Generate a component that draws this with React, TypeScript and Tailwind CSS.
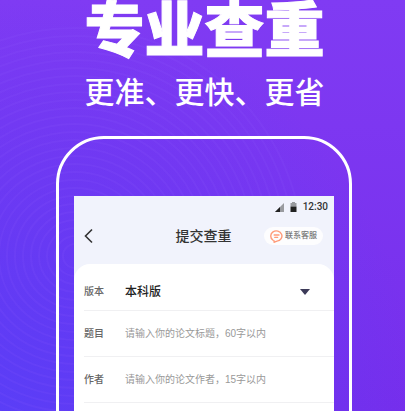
import type { ReactNode } from 'react';

const rings = Array.from({ length: 28 }, (_, i) => 12 + i * 8);

const fields = [
  { id: 'title', label: '题目', placeholder: '请输入你的论文标题，60字以内' },
  { id: 'author', label: '作者', placeholder: '请输入你的论文作者，15字以内' },
];

const Row = ({ id, label, children }: { id: string; label: string; children: ReactNode }) => (
  <div className="ml-[10px] flex h-[46px] items-center border-b border-[#f0f0f2] first:h-[47px] first:pt-[9px]">
    <label htmlFor={id} className="w-[41px] shrink-0 text-[10px] font-medium leading-4 text-[#666]">
      {label}
    </label>
    {children}
  </div>
);

const StatusBar = () => (
  <div className="flex h-[22px] items-center justify-end gap-[6px] pr-[6px]">
    {/* Signal */}
    <svg className="h-[9px] w-[9px]" viewBox="0 0 9 9">
      <path d="M0 9L9 0v9z" fill="#999b9f" />
      <path d="M0 9l5-5v5z" fill="#222" />
    </svg>
    {/* Battery */}
    <svg className="h-[10px] w-[7px]" viewBox="0 0 7 10">
      <path d="M2 0h3v1h1.5v3.5h-6V1H2z" fill="#999b9f" />
      <path d="M.5 4.5h6V10h-6z" fill="#222" />
    </svg>
    <span className="font-['Roboto',sans-serif] text-[10px] font-medium leading-3 text-[#333]">12:30</span>
  </div>
);

const App = () => {
  return (
    <div className="relative h-screen overflow-hidden bg-[radial-gradient(circle_at_0%_100%,#5a3ef7_0%,#5a3ef700_420px),linear-gradient(180deg,#803bf3,#762eec)] font-['Liberation_Sans','Noto_Sans_CJK_SC',sans-serif]">
      {/* Background rings */}
      <svg className="absolute inset-0 h-full w-full" fill="none" stroke="#9460ff" strokeWidth="2" strokeOpacity="0.12">
        {rings.map((r) => (
          <circle key={r} cx="75" cy="256" r={r} />
        ))}
      </svg>

      <main className="relative">
        <header className="h-[136px] text-center font-['Noto_Sans_CJK_SC',sans-serif] text-white">
          <h1 className="h-[70px] pl-1 text-[60px] font-black leading-[52px] [-webkit-text-stroke:1px_white]">专业查重</h1>
          <p className="pl-1 text-[30px] font-medium leading-10">更准、更快、更省</p>
        </header>

        {/* Phone frame */}
        <section className="ml-14 mr-[53px] h-[600px] rounded-t-[48px] border-[3px] border-white px-[15px] pt-[57px]">
          <div className="h-full bg-[#f1f3fc]">
            <StatusBar />
            <div className="grid h-[46px] grid-cols-[1fr_auto_1fr] items-center pb-[10px] pl-[10px] pr-[11px]">
              <button type="button" aria-label="返回" className="w-4">
                <svg className="h-4 w-[9px]" viewBox="0 0 9 16" fill="none" stroke="#333" strokeWidth="1.6">
                  <path d="M8 1.5L1.5 8L8 14.5" />
                </svg>
              </button>
              <h2 className="text-[14px] font-medium leading-5 text-[#333]">提交查重</h2>
              <button
                type="button"
                className="flex h-[18px] items-center gap-[2px] justify-self-end rounded-full bg-[#fdfdfe] px-[6px] text-[8px] font-medium leading-3 text-[#777]"
              >
                <svg className="h-[13px] w-[13px]" viewBox="0 0 13 13" fill="none" stroke="#ff9a78" strokeWidth="1.4" strokeLinecap="round">
                  <path d="M2.8 10A5.6 5.1 0 1 1 7 11.1L4.2 12.2L4 10.8" />
                  <path d="M4.2 5h4.8M4.8 7.4h2.8" />
                </svg>
                联系客服
              </button>
            </div>

            <form className="h-full rounded-t-2xl bg-white">
              <Row id="version" label="版本">
                <div className="relative mr-6 flex-1">
                  <select
                    id="version"
                    className="block w-full appearance-none bg-transparent text-[12px] font-medium leading-5 text-[#222]"
                  >
                    <option>本科版</option>
                  </select>
                  <svg className="pointer-events-none absolute right-0 top-[7px] h-[6px] w-[10px]" viewBox="0 0 10 6">
                    <path d="M0 0h10L5 6z" fill="#3c3a58" />
                  </svg>
                </div>
              </Row>
              {fields.map((field) => (
                <Row key={field.id} id={field.id} label={field.label}>
                  <input
                    id={field.id}
                    type="text"
                    placeholder={field.placeholder}
                    className="min-w-0 flex-1 bg-transparent text-[10px] leading-4 text-[#333] outline-none placeholder:text-[#999]"
                  />
                </Row>
              ))}
            </form>
          </div>
        </section>
      </main>
    </div>
  );
};

export default App;
